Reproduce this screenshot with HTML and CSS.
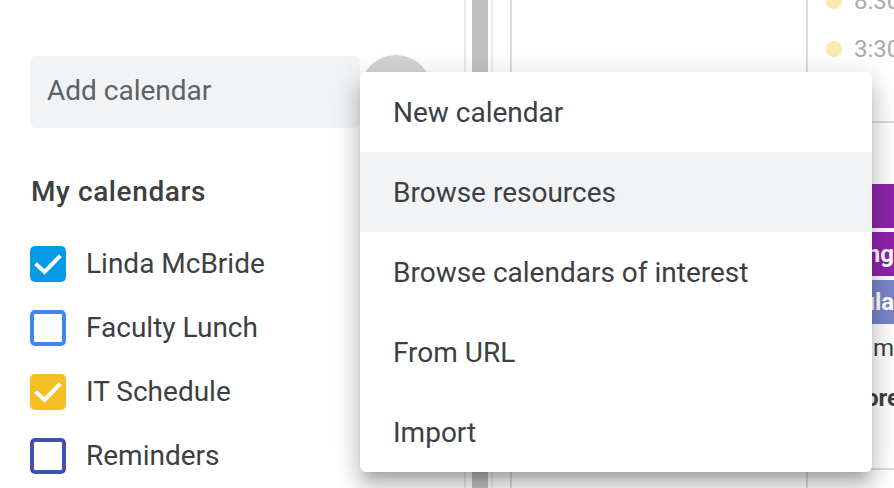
FILE: index.html
```html
<!DOCTYPE html>
<html>
<head>
<meta charset="utf-8">
<link rel="stylesheet" href="styles.css">
</head>
<body>
<div class="app">
  <aside class="sidebar">
    <div class="add-row">
      <div class="add-input">Add calendar</div>
      <div class="add-btn"></div>
    </div>
    <h2 class="section-title">My calendars</h2>
    <ul class="cal-list">
      <li class="cal-item">
        <span class="cb cb-checked cb-blue">
          <svg viewBox="0 0 36 36" width="36" height="36"><path d="M7 19 L14.5 26 L29 11" fill="none" stroke="#fff" stroke-width="4" stroke-linecap="square"/></svg>
        </span>
        <span class="cal-label">Linda McBride</span>
      </li>
      <li class="cal-item">
        <span class="cb cb-outline cb-lightblue"></span>
        <span class="cal-label">Faculty Lunch</span>
      </li>
      <li class="cal-item">
        <span class="cb cb-checked cb-yellow">
          <svg viewBox="0 0 36 36" width="36" height="36"><path d="M7 19 L14.5 26 L29 11" fill="none" stroke="#fff" stroke-width="4" stroke-linecap="square"/></svg>
        </span>
        <span class="cal-label">IT Schedule</span>
      </li>
      <li class="cal-item">
        <span class="cb cb-outline cb-indigo"></span>
        <span class="cal-label">Reminders</span>
      </li>
    </ul>
  </aside>
  <div class="gutter">
    <div class="thumb"></div>
    <div class="rail"></div>
  </div>
  <main class="grid"></main>
  <section class="agenda">
    <div class="ag-row"><span class="dot"></span><span class="ag-time">8:30</span></div>
    <div class="ag-row"><span class="dot"></span><span class="ag-time">3:30</span></div>
    <div class="ag-sep"></div>
    <div class="events">
      <div class="event ev-purple"></div>
      <div class="event ev-purple"><span class="ev-text">Meeting</span></div>
      <div class="event ev-lavender"><span class="ev-text ev-clip">Regular</span></div>
    </div>
    <div class="ag-note">Team</div>
    <div class="ag-note ag-bold"><span class="ev-clip2">more</span></div>
    <div class="ag-bottom"></div>
  </section>
</div>

<div class="menu">
  <div class="menu-item">New calendar</div>
  <div class="menu-item is-hover">Browse resources</div>
  <div class="menu-item">Browse calendars of interest</div>
  <div class="menu-item">From URL</div>
  <div class="menu-item">Import</div>
</div>
</body>
</html>
```

FILE: styles.css
```css
* { box-sizing: border-box; }

html, body {
  margin: 0;
  padding: 0;
  width: 894px;
  height: 488px;
  overflow: hidden;
  background: #fff;
  font-family: Roboto, "Liberation Sans", Arial, sans-serif;
  color: #3c4043;
}

.app {
  display: flex;
  height: 488px;
}

/* Sidebar */
.sidebar {
  width: 464px;
  flex: 0 0 464px;
  padding: 56px 0 0 30px;
}

.add-row {
  display: flex;
  align-items: center;
}

.add-input {
  width: 330px;
  height: 72px;
  background: #f1f3f4;
  border-radius: 6px;
  padding-left: 17px;
  font-size: 28px;
  line-height: 70px;
  color: #5f6368;
}

.add-btn {
  width: 72px;
  height: 72px;
  border-radius: 50%;
  background: #d3d4d6;
  margin-top: -2px;
}

.section-title {
  margin: 44px 0 0 1px;
  font-size: 28px;
  font-weight: 500;
  line-height: 40px;
  color: #3c4043;
  letter-spacing: 0.6px;
}

.cal-list {
  list-style: none;
  margin: 20px 0 0 0;
  padding: 0;
}

.cal-item {
  display: flex;
  align-items: center;
  height: 64px;
}

.cb {
  width: 36px;
  height: 36px;
  border-radius: 5px;
  flex: 0 0 36px;
  display: block;
}

.cb svg { display: block; }

.cb-checked.cb-blue { background: #039be5; }
.cb-checked.cb-yellow { background: #f6bf26; }

.cb-outline {
  border: 4px solid;
  background: #fff;
}
.cb-lightblue { border-color: #4285f4; }
.cb-indigo { border-color: #3f51b5; }

.cal-label {
  margin-left: 20px;
  font-size: 28px;
  line-height: 38px;
  color: #3c4043;
}

/* Scrollbar gutter */
.gutter {
  width: 46px;
  flex: 0 0 46px;
  display: flex;
  border-left: 2px solid #e8e8e8;
}

.thumb {
  width: 16px;
  margin-left: 6px;
  background: #c1c1c1;
}

.rail {
  width: 2px;
  margin-left: 3px;
  background: #ececec;
}

/* Main grid */
.grid {
  width: 298px;
  flex: 0 0 298px;
  border-left: 2px solid #dadce0;
  border-right: 2px solid #dadce0;
}

/* Agenda */
.agenda {
  flex: 1;
  overflow: hidden;
  position: relative;
}

.ag-row {
  display: flex;
  align-items: center;
  height: 48px;
  padding-left: 18px;
}
.ag-row:first-child { margin-top: -23px; }

.ag-sep {
  margin-top: 48px;
  border-bottom: 2px solid #dadce0;
}

.dot {
  width: 16px;
  height: 16px;
  border-radius: 50%;
  background: #fce8b2;
  flex: 0 0 16px;
}

.ag-time {
  margin-left: 12px;
  font-size: 24px;
  color: #a9a9a9;
  white-space: nowrap;
}

.events {
  margin-top: 61px;
  display: flex;
  flex-direction: column;
  gap: 4px;
}

.event {
  height: 44px;
  display: flex;
  align-items: center;
  justify-content: flex-end;
  overflow: hidden;
  white-space: nowrap;
  color: #fff;
  font-size: 24px;
  font-weight: 700;
}

.ev-purple { background: #8e24aa; }
.ev-lavender { background: #7986cb; }

.ev-text { white-space: nowrap; }
.ev-clip { margin-right: -9px; }

.ag-note {
  display: flex;
  justify-content: flex-end;
  white-space: nowrap;
  font-size: 24px;
  line-height: 28px;
  color: #3c4043;
  margin-top: 10px;
}
.ag-bold {
  font-weight: 700;
  margin-top: 22px;
}
.ev-clip2 { margin-right: -6px; }

.ag-bottom {
  margin-top: 56px;
  border-bottom: 2px solid #dadce0;
}

/* Popup menu */
.menu {
  position: absolute;
  left: 360px;
  top: 72px;
  width: 512px;
  background: #fff;
  border-radius: 6px;
  box-shadow: 0 10px 10px -6px rgba(0,0,0,.2),
              0 16px 20px 2px rgba(0,0,0,.14),
              0 6px 28px 4px rgba(0,0,0,.12);
  overflow: hidden;
}

.menu-item {
  height: 80px;
  line-height: 82px;
  padding-left: 33px;
  font-size: 28px;
  color: #3c4043;
  white-space: nowrap;
}

.menu-item.is-hover { background: #f1f3f4; }
```
